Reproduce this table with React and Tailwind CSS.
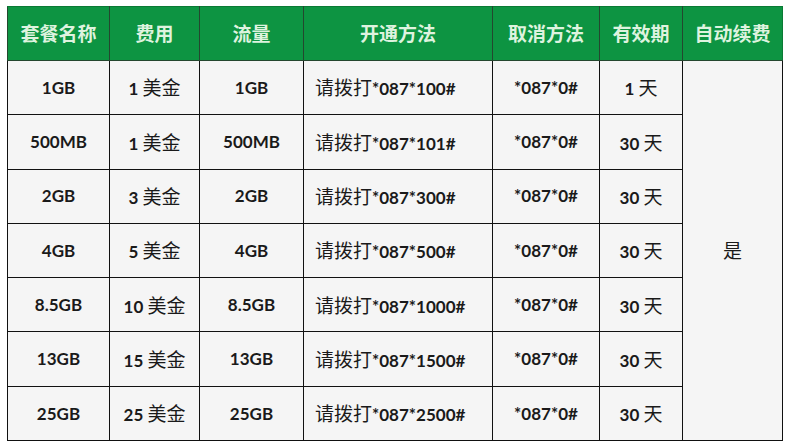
import React from 'react'

const plans = [
  { name: '1GB', fee: '1', data: '1GB', code: '100', days: '1' },
  { name: '500MB', fee: '1', data: '500MB', code: '101', days: '30' },
  { name: '2GB', fee: '3', data: '2GB', code: '300', days: '30' },
  { name: '4GB', fee: '5', data: '4GB', code: '500', days: '30' },
  { name: '8.5GB', fee: '10', data: '8.5GB', code: '1000', days: '30' },
  { name: '13GB', fee: '15', data: '13GB', code: '1500', days: '30' },
  { name: '25GB', fee: '25', data: '25GB', code: '2500', days: '30' },
]

const headers = ['套餐名称', '费用', '流量', '开通方法', '取消方法', '有效期', '自动续费']
const widths = ['w-[102px]', 'w-[90px]', 'w-[104px]', 'w-[189px]', 'w-[107px]', 'w-[83px]', 'w-[100px]']

// chinese glyphs in the body are regular weight, latin is bold
const cn = "font-normal text-[19px] font-['Noto_Sans_CJK_SC',sans-serif]"

function App() {
  return (
    <div className="w-[786px] h-[445px] bg-white pt-[6px] pl-[7px] font-['Lato','Noto_Sans_CJK_SC',sans-serif]">
      <table className="table-fixed border-collapse w-[775px] text-[17px] text-[#1a1a1a]">
        <colgroup>
          {widths.map(w => <col key={w} className={w} />)}
        </colgroup>
        <thead>
          <tr className="h-[54px] bg-[#0d9442]">
            {headers.map(h => (
              <th key={h}
                className="border border-[#24472f] border-t-[#0a7a35] last:border-r-[#0a7a35] text-center font-bold text-[19px] text-[#def3df] font-['Noto_Sans_CJK_SC',sans-serif]">
                {h}
              </th>
            ))}
          </tr>
        </thead>
        <tbody className="bg-[#f5f5f5]">
          {plans.map((p, i) => (
            <tr key={p.name} className="h-[54.3px]">
              <td className="border border-[#111] text-center font-bold">{p.name}</td>
              <td className="border border-[#111] text-center font-bold">
                {p.fee} <span className={cn}>美金</span>
              </td>
              <td className="border border-[#111] text-center font-bold">{p.data}</td>
              <td className="border border-[#111] text-left pl-[11px] font-bold">
                <span className={cn}>请拨打</span>*087*{p.code}#
              </td>
              <td className="border border-[#111] text-center font-bold">*087*0#</td>
              <td className="border border-[#111] text-center font-bold">
                {p.days} <span className={cn}>天</span>
              </td>
              {i === 0 && (
                <td rowSpan={plans.length} className={'border border-[#111] text-center ' + cn}>
                  是
                </td>
              )}
            </tr>
          ))}
        </tbody>
      </table>
    </div>
  )
}

export default App
